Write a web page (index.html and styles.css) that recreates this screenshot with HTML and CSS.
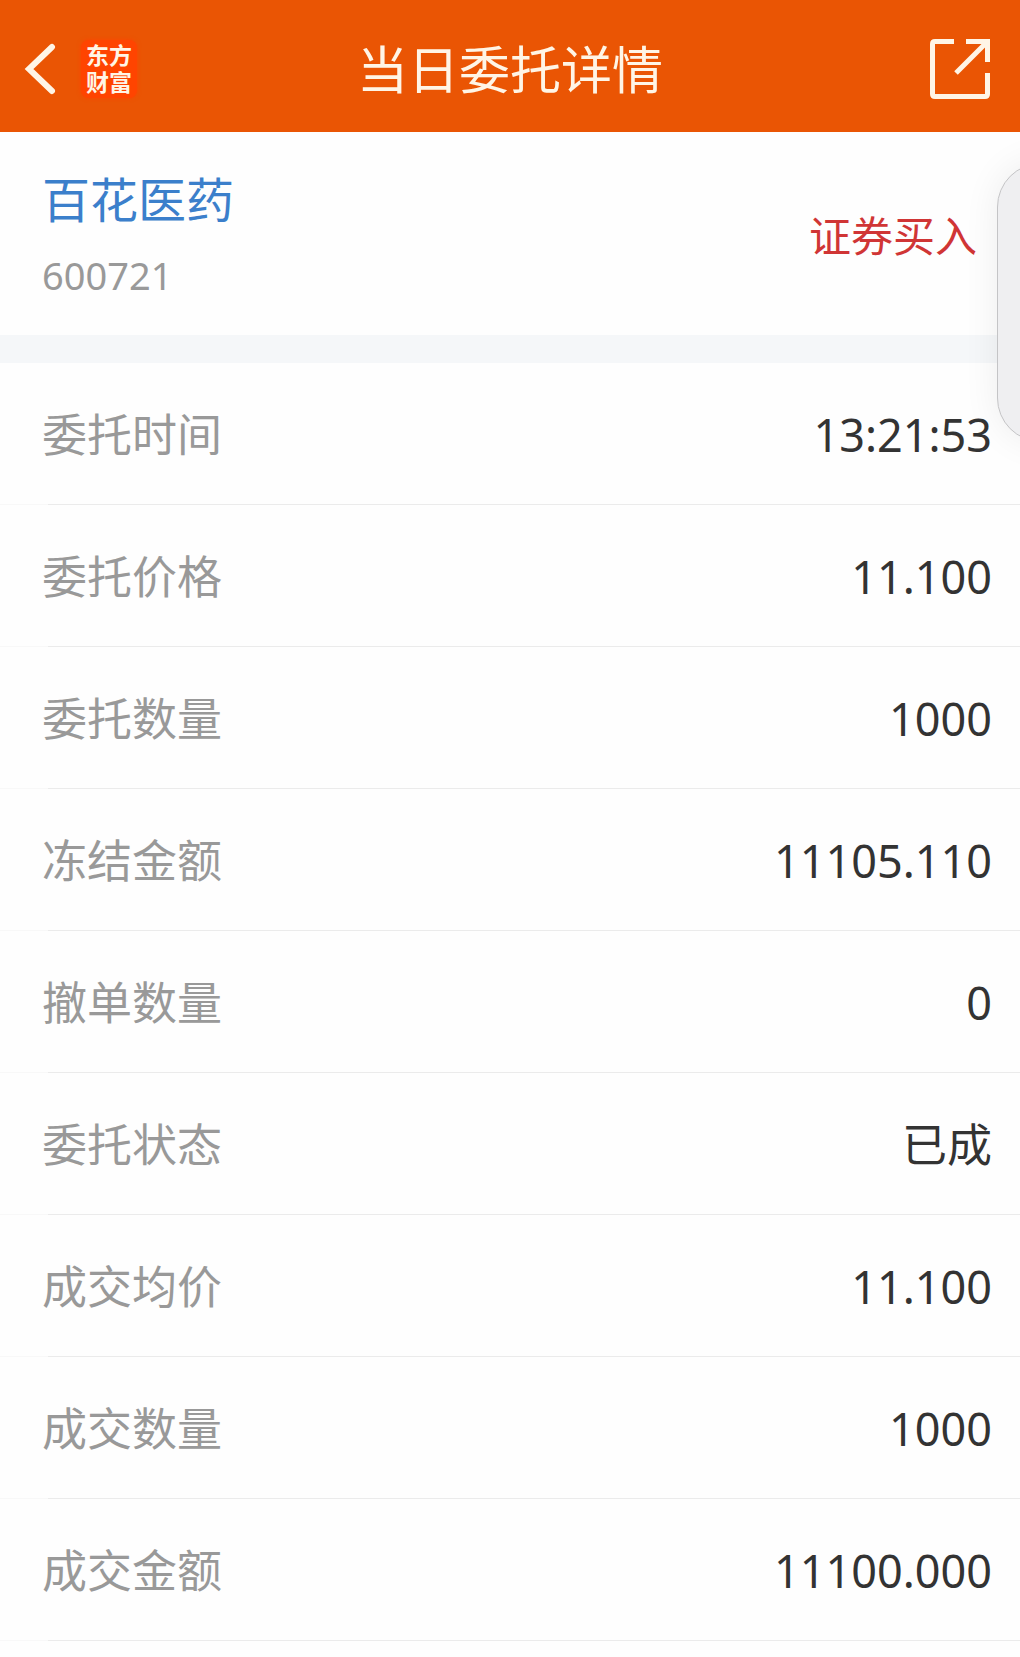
FILE: index.html
```html
<!DOCTYPE html>
<html lang="zh-CN">
<head>
<meta charset="utf-8">
<meta name="viewport" content="width=device-width, initial-scale=1">
<title>当日委托详情</title>
<link rel="stylesheet" href="styles.css">
</head>
<body>
<div class="page">
  <header class="topbar">
    <div class="topbar-start">
      <button class="icon-button" type="button" aria-label="返回">
        <svg width="32" height="52" viewBox="0 0 32 52" fill="none" stroke="currentColor" stroke-width="6" stroke-linecap="round" stroke-linejoin="miter"><path d="M28 4 5 26 28 48"/></svg>
      </button>
      <span class="logo">东方<br>财富</span>
    </div>
    <h1 class="title">当日委托详情</h1>
    <div class="topbar-end">
      <button class="icon-button" type="button" aria-label="分享">
        <svg width="60" height="60" viewBox="0 0 60 60" fill="none" stroke="currentColor" stroke-width="5"><path d="M24 2.500H5Q2.500 2.500 2.500 5V55Q2.500 57.500 5 57.500H55Q57.500 57.500 57.500 55V34"/><path d="M36 2.500H57.500V23M57 3 26 34"/></svg>
      </button>
    </div>
  </header>
  <main>
    <section class="stock">
      <div>
        <h2 class="stock-name">百花医药</h2>
        <p class="stock-code">600721</p>
      </div>
      <p class="side">证券买入</p>
    </section>
    <dl class="details">
      <div class="row"><dt>委托时间</dt><dd>13:21:53</dd></div>
      <div class="row"><dt>委托价格</dt><dd>11.100</dd></div>
      <div class="row"><dt>委托数量</dt><dd>1000</dd></div>
      <div class="row"><dt>冻结金额</dt><dd>11105.110</dd></div>
      <div class="row"><dt>撤单数量</dt><dd>0</dd></div>
      <div class="row"><dt>委托状态</dt><dd>已成</dd></div>
      <div class="row"><dt>成交均价</dt><dd>11.100</dd></div>
      <div class="row"><dt>成交数量</dt><dd>1000</dd></div>
      <div class="row"><dt>成交金额</dt><dd>11100.000</dd></div>
    </dl>
  </main>
  <div class="drawer-handle"></div>
</div>
</body>
</html>
```
FILE: styles.css
```css
* {
  box-sizing: border-box;
}

body,
h1,
h2,
p,
dl,
dd {
  margin: 0;
}

body {
  background: #fefefe;
  color: #333;
  font-family: "Noto Sans", "Noto Sans CJK SC", sans-serif;
}

.page {
  position: relative;
  min-height: 100vh;
  overflow: hidden;
}

.topbar {
  display: grid;
  grid-template-columns: 1fr auto 1fr;
  align-items: center;
  height: 132px;
  padding: 5px 24px 0;
  background: #ea5504;
  color: #fff5e6;
}

.topbar-start {
  display: flex;
  align-items: center;
  gap: 25px;
}

.topbar-end {
  display: flex;
  justify-content: flex-end;
  padding-right: 6px;
}

.icon-button {
  display: flex;
  padding: 0;
  border: 0;
  background: none;
  color: inherit;
}

.logo {
  width: 56px;
  padding: 1px 0 3px;
  border-radius: 8px;
  background: #ff4400;
  box-shadow: 0 0 4px #ff4400;
  font-family: "Noto Sans CJK SC", sans-serif;
  font-size: 23px;
  font-weight: 700;
  line-height: 27px;
  text-align: center;
}

.title {
  font-size: 51px;
  font-weight: 400;
  line-height: 64px;
}

.stock {
  display: flex;
  align-items: center;
  justify-content: space-between;
  padding: 36px 43px 32px 42px;
  border-bottom: 28px solid #f5f7f9;
}

.stock-name {
  color: #3b7fcb;
  font-size: 48px;
  font-weight: 400;
  line-height: 64px;
}

.stock-code {
  margin-top: 15px;
  color: #999;
  font-size: 38px;
  line-height: 56px;
}

.side {
  color: #d03535;
  font-size: 42px;
  line-height: 56px;
}

.row {
  display: flex;
  align-items: center;
  justify-content: space-between;
  height: 142px;
  padding: 2px 28px 0 42px;
  background: linear-gradient(90deg, #f8f8f8 48px, #ebebeb 48px) bottom / 100% 1px no-repeat;
  font-size: 45px;
  line-height: 64px;
}

.row dt {
  color: #999;
}

.drawer-handle {
  position: absolute;
  top: 163px;
  right: -65px;
  width: 88px;
  height: 279px;
  border: 1px solid #c4c4c6;
  border-radius: 44px;
  background: #efeff1;
  box-shadow: 0 0 36px rgba(0, 0, 20, 0.07);
}
```
